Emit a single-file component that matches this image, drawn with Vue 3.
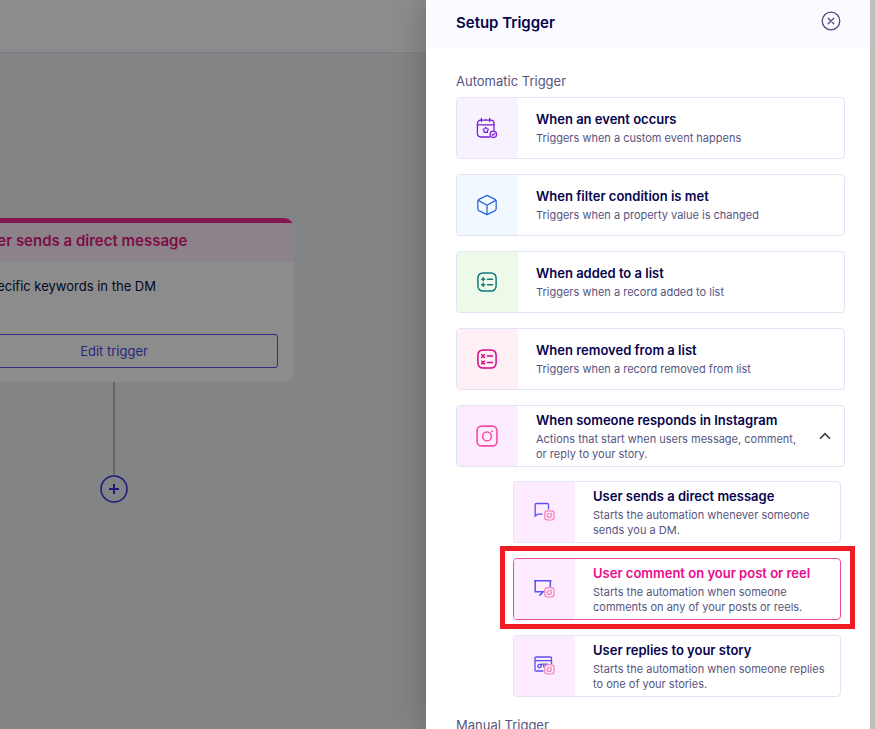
<script setup>
const automatic = [
  { id: 'event', icon: 'calendar', tone: 'violet', title: 'When an event occurs', text: 'Triggers when a custom event happens' },
  { id: 'filter', icon: 'cube', tone: 'blue', title: 'When filter condition is met', text: 'Triggers when a property value is changed' },
  { id: 'added', icon: 'added', tone: 'green', title: 'When added to a list', text: 'Triggers when a record added to list' },
  { id: 'removed', icon: 'removed', tone: 'rose', title: 'When removed from a list', text: 'Triggers when a record removed from list' },
  { id: 'instagram', icon: 'instagram', tone: 'pink', title: 'When someone responds in Instagram', text: 'Actions that start when users message, comment, or reply to your story.', open: true },
]
const instagram = [
  { id: 'dm', title: 'User sends a direct message', text: 'Starts the automation whenever someone sends you a DM.' },
  { id: 'comment', title: 'User comment on your post or reel', text: 'Starts the automation when someone comments on any of your posts or reels.', selected: true },
  { id: 'story', title: 'User replies to your story', text: 'Starts the automation when someone replies to one of your stories.' },
]
</script>

<template>
  <div class="app">
    <main class="workspace">
      <header class="topbar"></header>
      <div class="canvas">
        <section class="node">
          <h2 class="node-title">User sends a direct message</h2>
          <div class="node-body">
            <p class="node-text">Specific keywords in the DM</p>
            <button class="edit" type="button">Edit trigger</button>
          </div>
        </section>
        <div class="connector"></div>
        <button class="add" type="button" aria-label="Add step">
          <svg viewBox="0 0 28 28" width="28" height="28" fill="none" stroke="currentColor">
            <circle cx="14" cy="14" r="13" stroke-width="1.6" />
            <path d="M14 9v10M9 14h10" stroke-width="2" />
          </svg>
        </button>
      </div>
    </main>
    <div class="overlay"></div>

    <aside class="drawer">
      <header class="drawer-head">
        <h1 class="drawer-title">Setup Trigger</h1>
        <button class="close" type="button" aria-label="Close">
          <svg viewBox="0 0 20 20" width="20" height="20" fill="none" stroke="currentColor" stroke-width="1.3" stroke-linecap="round">
            <circle cx="10" cy="10" r="8.8" />
            <path d="M7.2 7.2l5.6 5.6M12.8 7.2l-5.6 5.6" />
          </svg>
        </button>
      </header>

      <div class="drawer-body">
        <h3 class="group">Automatic Trigger</h3>
        <div class="list">
          <button v-for="item in automatic" :key="item.id" class="card" type="button" :aria-expanded="item.open">
            <span class="tile" :class="item.tone">
              <svg viewBox="0 0 22 22" width="22" height="22" fill="none" stroke="currentColor" stroke-width="1.3" stroke-linecap="round" stroke-linejoin="round">
                <template v-if="item.icon === 'calendar'">
                  <path d="M13.5 20H4.6A3.2 3.2 0 0 1 1.4 16.8V6.4A3.2 3.2 0 0 1 4.6 3.2H14.8A3.2 3.2 0 0 1 18 6.4V13" />
                  <path d="M1.4 7.8H18M5.4 1.5V4.5M9.8 2.6V3.2M13.7 1.5V4.5" />
                  <path d="M9.8 10.4l1 1.3 1.7.6-1 1.5v1.7l-1.7-.4-1.7.4v-1.7l-1-1.5 1.7-.6z" stroke-width="1.1" />
                  <circle cx="17.3" cy="17.3" r="3.2" />
                  <path d="M15.9 17.4l1 1 1.8-1.9" stroke-width="1.1" />
                </template>
                <template v-else-if="item.icon === 'cube'">
                  <path d="M11 1.4l7.6 3.7q1.6.8 1.6 2.5v6.8q0 1.7-1.5 2.5L11 20.6l-7.700-3.700q-1.500-.8-1.500-2.500V7.600q0-1.700 1.600-2.500z" />
                  <path d="M2.3 6.4L11 11.2l8.7-4.8M11 11.2v9.2" />
                </template>
                <template v-else-if="item.icon === 'added'">
                  <rect x="1.9" y="1.9" width="18.2" height="18.2" rx="5" stroke-width="1.5" />
                  <path d="M5.7 8.3h3M7.2 6.8v3M5.7 13.7h3M7.2 12.2v3M11.5 8.3h5M11.5 13.7h5" stroke-width="1.5" />
                </template>
                <template v-else-if="item.icon === 'removed'">
                  <rect x="1.9" y="1.9" width="18.2" height="18.2" rx="5" stroke-width="1.5" />
                  <path d="M5.7 6.8l2.7 2.7M8.4 6.8L5.7 9.5M5.7 13.2l2.7 2.7M8.4 13.2l-2.7 2.7M11.5 8.1h5M11.5 14.5h5" stroke-width="1.5" />
                </template>
                <template v-else>
                  <rect x="1.1" y="1.1" width="19.8" height="19.8" rx="4.5" stroke-width="1.6" />
                  <circle cx="11" cy="11.4" r="4.4" stroke-width="1.6" />
                  <path d="M15.8 6.3h.6" stroke-width="1.5" />
                </template>
              </svg>
            </span>
            <span class="copy">
              <span class="title">{{ item.title }}</span>
              <span class="text">{{ item.text }}</span>
            </span>
            <svg v-if="item.open" class="chevron" viewBox="0 0 12 8" width="12" height="8" fill="none" stroke="currentColor" stroke-width="1.6">
              <path d="M1 6.700l5-5 5 5" />
            </svg>
          </button>
        </div>

        <div class="list nested">
          <div v-for="item in instagram" :key="item.id" class="slot">
            <button class="card" :class="{ selected: item.selected }" type="button">
              <span class="tile pink">
                <svg viewBox="0 0 24 24" width="24" height="24" fill="none" stroke="#5a50f5" stroke-width="1.3">
                  <path v-if="item.id === 'dm'" d="M16.5 9.5V4.6q0-1.1-1.1-1.1H4.3q-1.1 0-1.1 1.1V16l2.7-1.8H10.5" />
                  <path v-else-if="item.id === 'comment'" d="M2 3.7H19.5M3.2 3.7V14.7H8.5M18.3 3.7V10M11.7 14.3L7.3 18.7M8 14.7H11.7" stroke-width="1.5" />
                  <template v-else>
                    <path d="M11.5 17H4.2q-1.2 0-1.2-1.2V4.2Q3 3 4.2 3H18.3q1.2 0 1.2 1.2V10M3 6.6H19.5" />
                    <circle cx="7.6" cy="12" r="1.7" />
                    <path d="M9.3 12V10.2H16M11.8 10.2V13.5M14.2 10.2V11.5" />
                  </template>
                  <g stroke="#f77fb2" stroke-width="1.2">
                    <rect x="12.8" y="10.8" width="9.2" height="9.2" rx="2.4" fill="#fdebff" />
                    <circle cx="17.3" cy="15.5" r="2" />
                    <path d="M19.2 13.2h.7" />
                  </g>
                </svg>
              </span>
              <span class="copy">
                <span class="title">{{ item.title }}</span>
                <span class="text">{{ item.text }}</span>
              </span>
            </button>
            <span v-if="item.selected" class="callout"></span>
          </div>
        </div>

        <h3 class="group manual">Manual Trigger</h3>
      </div>
    </aside>
  </div>
</template>

<style>
body {
  overflow: hidden;
}
</style>

<style scoped>
.app {
  position: relative;
  display: flex;
  height: 100vh;
  overflow: hidden;
  font-family: Inter, "Liberation Sans", sans-serif;
  color: #06044c;
}
button {
  font: inherit;
  color: inherit;
  cursor: pointer;
}
h1, h2, h3, p {
  margin: 0;
}
.workspace {
  flex: 1;
  min-width: 0;
  display: flex;
  flex-direction: column;
}
.topbar {
  height: 52px;
  background: #fff;
  border-bottom: 1px solid #dde6f7;
}
.canvas {
  flex: 1;
  display: flex;
  flex-direction: column;
  align-items: flex-start;
  padding-top: 165px;
  background: #eff1f3;
}
.node {
  width: 360px;
  margin-left: -66px;
  box-sizing: border-box;
  border-radius: 10px;
  overflow: hidden;
  background: #fff;
}
.node-title {
  padding: 8px 0 12px 44px;
  border-top: 5px solid #ee2a90;
  background: #ffeefb;
  color: #e5177f;
  font-size: 15px;
  line-height: 19px;
  font-weight: 600;
}
.node-body {
  padding: 14px 16px;
}
.node-text {
  margin-bottom: 38px;
  font-size: 13px;
  line-height: 20px;
  text-align: right;
  padding-right: 122px;
  white-space: nowrap;
  color: #04103c;
}
.edit {
  display: block;
  width: 100%;
  height: 34px;
  border: 1px solid #5a50f5;
  border-radius: 3px;
  background: #fff;
  color: #5046e5;
  font-size: 13px;
}
.connector {
  width: 2px;
  height: 93px;
  margin-left: 113px;
  background: #b9b9b9;
}
.add {
  width: 28px;
  height: 28px;
  margin-left: 100px;
  padding: 0;
  border: 0;
  background: none;
  color: #3b30e0;
}
.add svg,
.close svg {
  display: block;
}
.overlay {
  position: absolute;
  inset: 0;
  background: rgba(0, 0, 0, 0.45);
}
.drawer {
  position: relative;
  width: 444px;
  flex: none;
  box-sizing: border-box;
  margin-right: 5px;
  background: #fff;
  box-shadow: 0 0 30px rgba(0, 0, 0, 0.25);
}
.app::after {
  content: "";
  position: absolute;
  inset: 0 0 0 auto;
  width: 5px;
  background: #bebebe;
}
.drawer-head {
  display: flex;
  justify-content: space-between;
  align-items: flex-start;
  height: 49px;
  box-sizing: border-box;
  padding: 11px 29px 0 30px;
  background: #fbfaff;
}
.drawer-title {
  font-size: 15px;
  line-height: 24px;
  font-weight: 600;
}
.close {
  padding: 0;
  border: 0;
  background: none;
  color: #4c4a80;
}
.drawer-body {
  padding: 22px 25px 0 30px;
}
.group {
  font-size: 13px;
  line-height: 20px;
  font-weight: 400;
  color: #57557f;
}
.group.manual {
  margin-top: 18px;
}
.list {
  display: flex;
  flex-direction: column;
  gap: 15px;
  margin-top: 6px;
}
.list.nested {
  margin-top: 14px;
  padding: 0 4px 0 57px;
}
.slot {
  position: relative;
}
.card {
  display: flex;
  align-items: stretch;
  width: 100%;
  height: 62px;
  padding: 0;
  overflow: hidden;
  border: 1px solid #e0e4f4;
  border-radius: 4px;
  background: #fff;
  text-align: left;
}
.card.selected {
  border-color: #ea4c9c;
}
.card.selected .title {
  color: #ec0a8c;
}
.tile {
  flex: none;
  display: grid;
  place-items: center;
  box-sizing: border-box;
  width: 61px;
  padding-right: 2px;
}
.violet { background: #f8f2ff; color: #7a1fd6; }
.blue { background: #f2f8ff; color: #2b66d9; }
.green { background: #edf9e9; color: #127a7a; }
.rose { background: #fff0f6; color: #d5098a; }
.pink { background: #fdebff; color: #f94fab; }
.copy {
  flex: 1;
  min-width: 0;
  display: flex;
  flex-direction: column;
  justify-content: center;
  gap: 3px;
  padding: 1px 8px 0 18px;
}
.title {
  font-size: 13px;
  line-height: 17px;
  font-weight: 600;
}
.text {
  font-size: 11px;
  line-height: 15px;
  color: #57557f;
}
.chevron {
  flex: none;
  align-self: center;
  margin: 0 13px 0 5px;
  color: #3c3c48;
}
.callout {
  position: absolute;
  inset: -12px -14px -9px -13px;
  border: 5px solid #ef1c24;
  pointer-events: none;
}
</style>
